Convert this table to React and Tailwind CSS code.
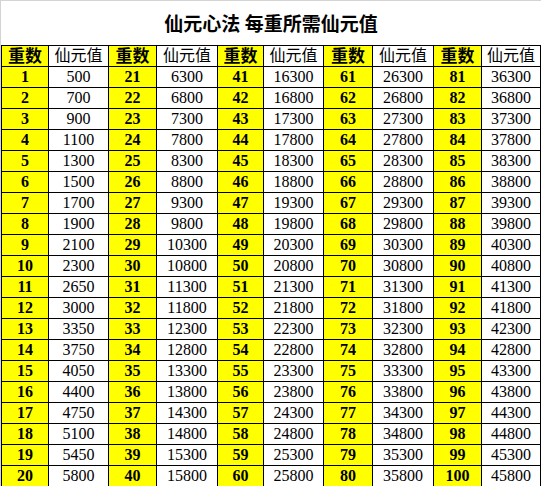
import React from 'react';

const FIRST = [500, 700, 900, 1100, 1300, 1500, 1700, 1900, 2100, 2300, 2650, 3000, 3350, 3750, 4050, 4400, 4750, 5100, 5450, 5800];

function valueFor(level) {
    if (level <= 20) return FIRST[level - 1];
    return 6300 + (level - 21) * 500;
}

const cellBase = "flex items-center justify-center text-black leading-none font-['Liberation_Serif','Noto_Sans_CJK_SC',serif]";
const levelHead = `${cellBase} bg-[#ffff00] text-[17px] font-bold`;
const levelCell = `${cellBase} bg-[#ffff00] text-[16px] font-bold`;
const valueCell = `${cellBase} bg-white text-[16px]`;

function App() {
    const rows = Array.from({ length: 20 }, (_, i) => i);
    const groups = [0, 1, 2, 3, 4];

    return (
        <div className="w-[541px] h-[486px] bg-white border-l border-t border-[#d4d4d4] overflow-hidden">
            {/* Title */}
            <div className="h-[44px] flex items-center justify-center text-[19px] font-bold text-black font-['Noto_Sans_CJK_SC',sans-serif]">
                仙元心法 每重所需仙元值
            </div>

            {/* Table */}
            <div className="grid grid-cols-[46px_59px_47px_60px_45px_59px_48px_60px_47px_58px] auto-rows-[20px] gap-px p-px bg-black w-[540px]">
                {groups.map((g) => (
                    <React.Fragment key={`h${g}`}>
                        <div className={levelHead}>重数</div>
                        <div className={valueCell}>仙元值</div>
                    </React.Fragment>
                ))}
                {rows.map((i) =>
                    groups.map((g) => {
                        const level = g * 20 + i + 1;
                        return (
                            <React.Fragment key={`${i}-${g}`}>
                                <div className={levelCell}>{level}</div>
                                <div className={valueCell}>{valueFor(level)}</div>
                            </React.Fragment>
                        );
                    })
                )}
            </div>
        </div>
    );
}

export default App;
